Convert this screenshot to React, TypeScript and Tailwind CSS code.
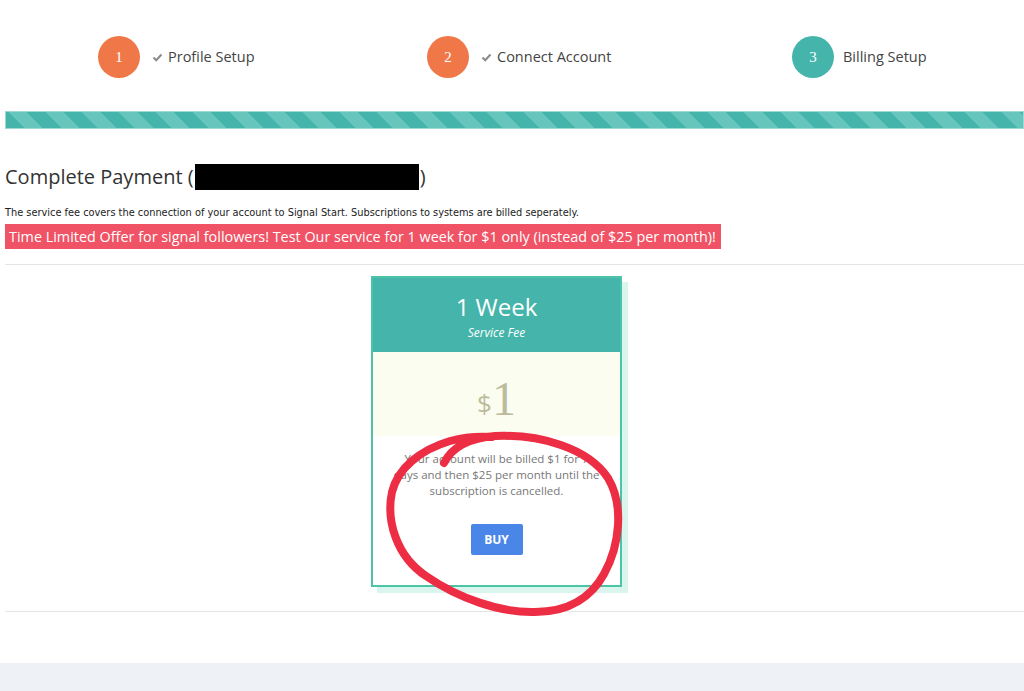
import React from 'react';

const steps = [
  { n: 1, label: 'Profile Setup', done: true, w: 'w-[329px]' },
  { n: 2, label: 'Connect Account', done: true, w: 'w-[365px]' },
  { n: 3, label: 'Billing Setup', done: false, w: 'w-[200px]' },
];

const Check = () => (
  <svg width="11" height="9" viewBox="0 0 11 9" className="mr-[5px]">
    <path d="M1.5 4.5 L4.2 7.2 L9.5 1.5" fill="none" stroke="#8a8a8a" strokeWidth="2" />
  </svg>
);

const App: React.FC = () => {
  return (
    <div
      className="relative w-[1024px] h-[691px] bg-white overflow-hidden flex flex-col"
      style={{ fontFamily: '"Open Sans", "DejaVu Sans", sans-serif' }}
    >
      {/* steps */}
      <div className="flex pt-[36px] pl-[98px]">
        {steps.map((s) => (
          <div key={s.n} className={`flex items-center ${s.w}`}>
            <div
              className={`w-[42px] h-[42px] rounded-full flex items-center justify-center text-white text-[15px] ${
                s.done ? 'bg-[#f07848]' : 'bg-[#45b5ab]'
              }`}
              style={{ fontFamily: '"Liberation Serif", serif' }}
            >
              {s.n}
            </div>
            <div className={`flex items-center text-[14.5px] text-[#444] ${s.done ? 'ml-[12px]' : 'ml-[9px]'}`}>
              {s.done && <Check />}
              <span>{s.label}</span>
            </div>
          </div>
        ))}
      </div>

      {/* progress bar */}
      <div className="mt-[33px] ml-[5px] h-[18px] border border-[#9ed9d3] bg-[repeating-linear-gradient(45deg,#45b5ab_0px,#45b5ab_13px,#66c6bd_13px,#66c6bd_26px)]" />

      <div className="pl-[5px]">
        <h2 className="mt-[33px] flex items-center text-[20px] leading-[30px] text-[#333]">
          Complete Payment (
          <span className="inline-block w-[224px] h-[26px] bg-black mx-[1px]" />)
        </h2>
        <p className="mt-[14px] text-[10.9px] leading-[14px] text-[#222]" style={{ fontFamily: '"DejaVu Sans Condensed", "DejaVu Sans", sans-serif' }}>
          The service fee covers the connection of your account to Signal Start. Subscriptions to systems are billed seperately.
        </p>
        <div className="mt-[4px] inline-block bg-[#ef5365] text-white text-[14.4px] leading-[25px] pl-[4px] pr-[5px]">
          Time Limited Offer for signal followers! Test Our service for 1 week for $1 only (instead of $25 per month)!
        </div>
        <div className="mt-[15px] border-t border-[#e4e4e4]" />

        {/* plan card */}
        <div className="mt-[11px] ml-[366px] w-[251px] relative">
          <div className="absolute left-[6px] top-[6px] w-[251px] h-[311px] bg-[#d9f5ee]" />
          <div className="relative border-2 border-[#4cc4a8] bg-white h-[311px] flex flex-col">
            <div className="bg-[#45b5ab] h-[74px] flex flex-col items-center text-white">
              <div className="mt-[14px] text-[24px] leading-[30px]">1 Week</div>
              <div className="text-[12px] italic leading-[16px] mt-[3px]">Service Fee</div>
            </div>
            <div className="h-[84px] bg-[#fbfdf0] flex items-center justify-center pt-[10px] text-[#bcbc9c]" style={{ fontFamily: '"Liberation Serif", serif' }}>
              <span className="text-[26px] mt-[8px]" style={{ fontFamily: '"Open Sans", sans-serif' }}>$</span>
              <span className="text-[48px] leading-none">1</span>
            </div>
            <p className="mt-[15px] px-[20px] text-center text-[11.5px] leading-[16px] text-[#777]">
              Your account will be billed $1 for 7 days and then $25 per month until the subscription is cancelled.
            </p>
            <div className="flex justify-center mt-[25px]">
              <button className="w-[52px] h-[31px] bg-[#4a86e8] text-white text-[12px] font-bold rounded-[2px]">BUY</button>
            </div>
          </div>
        </div>

        <div className="mt-[24px] border-t border-[#e4e4e4]" />
      </div>

      <div className="mt-auto h-[28px] bg-[#eef1f5]" />

      {/* hand-drawn annotation */}
      <svg className="absolute left-0 top-0 pointer-events-none" width="1024" height="691">
        <path
          d="M444 463 C452 447 470 438 495 436 C540 434 588 448 608 478 C624 505 620 545 604 574 C592 596 570 612 535 612 C500 613 458 598 426 576 C396 556 386 520 392 492 C398 468 420 450 450 441 C465 437 478 436 492 437"
          fill="none"
          stroke="#ec2d43"
          strokeWidth="8"
          strokeLinecap="round"
        />
      </svg>
    </div>
  );
};

export default App;
